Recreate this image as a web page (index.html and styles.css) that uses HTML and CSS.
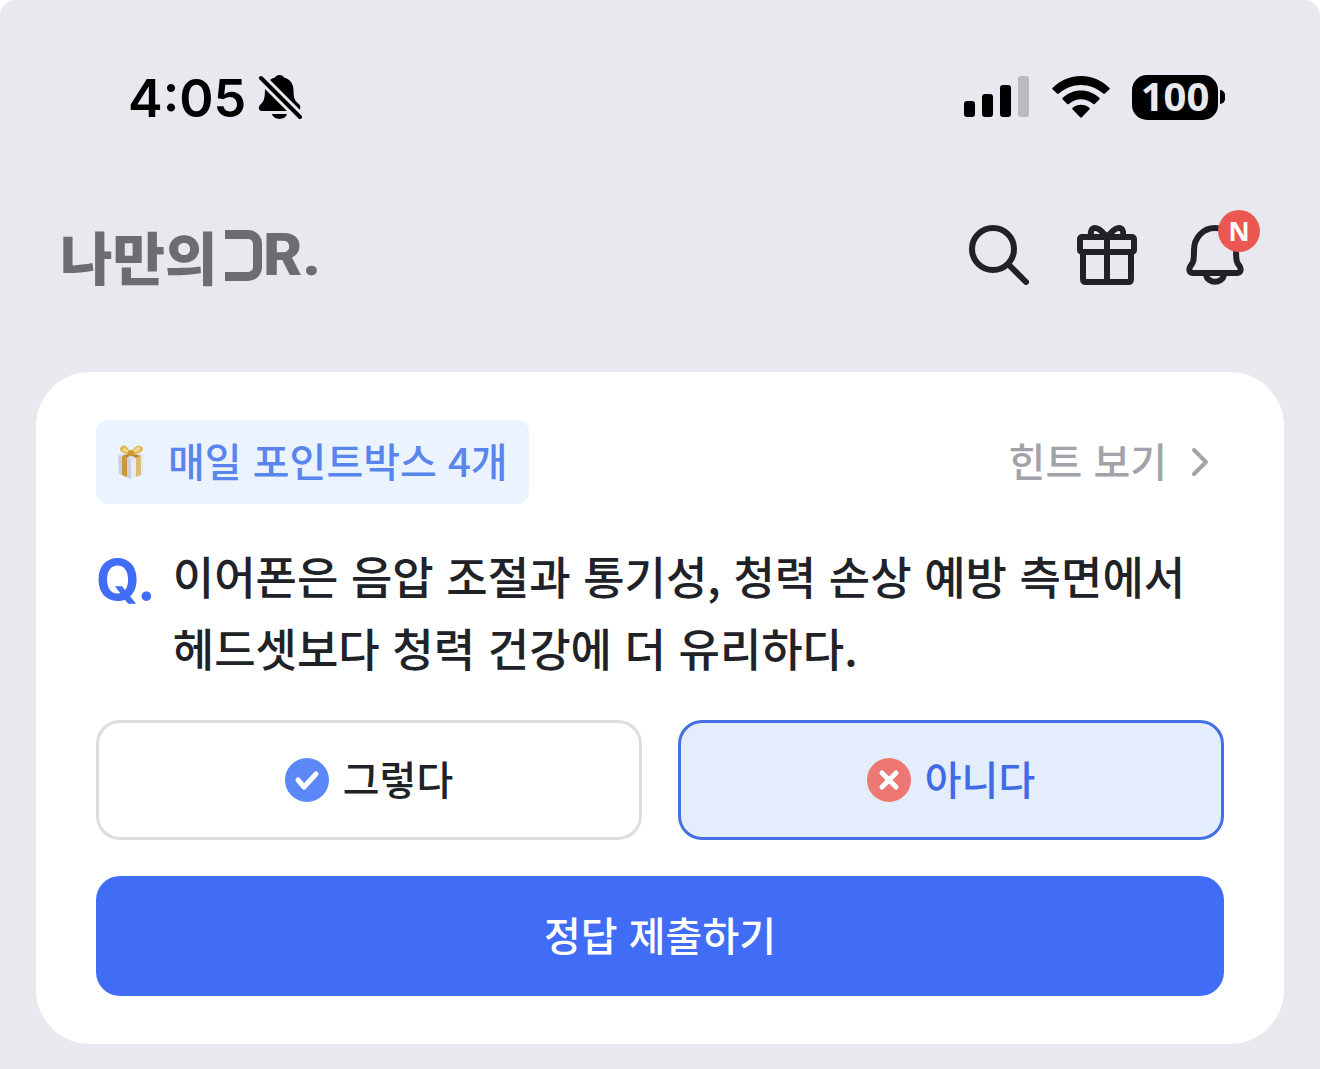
FILE: index.html
```html
<!DOCTYPE html>
<html lang="ko">
<head>
  <meta charset="UTF-8">
  <meta name="viewport" content="width=device-width, initial-scale=1">
  <title>나만의DR.</title>
  <link rel="stylesheet" href="styles.css">
</head>
<body>
  <div class="screen">

    <div class="status-bar">
      <div class="status-left">
        <span class="time">4:05</span>
        <svg width="44" height="46" viewBox="0 0 44 46" aria-hidden="true">
          <path d="M9 9 C11 6 14 4.500 17 3.500 C18 0 25 0 26 3.500 C32 5 35.500 10 35.500 16 C35.500 25 37 27 41 30 C43 32 43 37 39 37 H4 C0 37 0 32 3 30 C6 27 7 24 7 14 Z"/>
          <path d="M14 40 H29 C27 46.500 16 46.500 14 40 Z"/>
          <path class="slash-gap" d="M0 1 L44 45"/>
          <path class="slash" d="M3 4 L42 43"/>
        </svg>
      </div>
      <div class="status-right">
        <svg width="66" height="42" viewBox="0 0 66 42" aria-hidden="true">
          <rect x="0" y="25" width="11" height="16" rx="3"/>
          <rect x="18" y="18" width="11" height="23" rx="3"/>
          <rect x="36" y="9" width="11" height="32" rx="3"/>
          <rect class="bar-off" x="54" y="0" width="11" height="41" rx="3"/>
        </svg>
        <svg width="58" height="42" viewBox="0 0 58 42" aria-hidden="true">
          <path d="M0.500 12 C16 -4 42 -4 57.500 12 Q58 12.700 57.500 13.200 L53 17.600 Q52 18.300 51.200 17.600 C39 6 19 6 6.800 17.600 Q6 18.300 5 17.600 L0.500 13.200 Q0 12.700 0.500 12 Z"/>
          <path d="M10.500 22 C21 12 37 12 47.500 22 Q48 22.700 47.500 23.300 L42.800 28 Q42 28.600 41.200 28 C34 21.500 24 21.500 16.800 28 Q16 28.600 15.200 28 L10.500 23.300 Q10 22.700 10.500 22 Z"/>
          <path d="M20.400 32 C25.500 27.800 32.500 27.800 37.600 32 Q38.200 32.700 37.600 33.300 L29.800 41.300 Q29 42 28.200 41.300 L20.400 33.300 Q19.800 32.700 20.400 32 Z"/>
        </svg>
        <div class="battery"><span class="battery-level">100</span><span class="battery-cap"></span></div>
      </div>
    </div>

    <header class="app-header">
      <h1 class="logo"><span>나만의</span><span class="logo-d" role="img" aria-label="D"></span><span class="logo-r">R.</span></h1>
      <nav class="actions">
        <button class="icon-btn" type="button" aria-label="검색">
          <svg width="60" height="60" viewBox="0 0 60 60">
            <circle cx="24" cy="24" r="21"/>
            <path d="M39 39 L57 57"/>
          </svg>
        </button>
        <button class="icon-btn" type="button" aria-label="선물">
          <svg width="60" height="60" viewBox="0 0 60 60">
            <rect x="3" y="12" width="54" height="15" rx="2"/>
            <path d="M6 27 V54 Q6 57 9 57 H51 Q54 57 54 54 V27 M30 12 V57"/>
            <path d="M14 11 C13 6 15 3 18 3 C23 3 26 8 30 12 C34 8 37 3 42 3 C45 3 47 6 46 11"/>
          </svg>
        </button>
        <button class="icon-btn" type="button" aria-label="알림">
          <svg width="60" height="60" viewBox="0 0 60 60">
            <path d="M30 3 C18 3 9 13 9 25 C9 37 8 38 5.500 41 C3 45 5 48 8 48 H52 C55 48 57 45 54.500 41 C52 38 51 37 51 25 C51 13 42 3 30 3 Z"/>
            <path d="M21 50 C23 59 37 59 39 50"/>
          </svg>
          <span class="badge">N</span>
        </button>
      </nav>
    </header>

    <main class="card">
      <div class="card-top">
        <div class="chip">
          <svg width="28" height="36" viewBox="0 0 28 36" aria-hidden="true">
            <path fill="#cfcedb" d="M1 11 L14 15 V35 L2 30 Z"/>
            <path fill="#e9e9f4" d="M14 15 L27 11 L26 30 L14 35 Z"/>
            <path fill="#dddce6" d="M1 11 L14 8 L27 11 L14 16 Z"/>
            <path fill="#c39a3e" d="M5 12 L10 14 V33 L5 31 Z"/>
            <path fill="#d9bd75" d="M19 14 L24 12 V31 L19 33 Z"/>
            <path fill="#b98d2f" d="M5 12 L14 9 L24 12 L19 14 L14 11 L10 14 Z"/>
            <path fill="#dfb94f" d="M14 9 C10 1 6 0 4 3 C1 6 4 9 14 11 C24 10 28 6 25 3 C22 0 17 2 14 9 Z"/>
            <path fill="#f0da90" d="M12 8 C9 4 7 3 6 5 C5 7 8 8 12 8 Z M16 8 C19 3 22 2 23 4 C24 6 20 8 16 8 Z"/>
            <circle cx="14" cy="9" r="3" fill="#c9962f"/>
          </svg>
          <span class="label">매일 포인트박스 4개</span>
        </div>
        <a class="hint" href="#hint">
          <span class="label">힌트 보기</span>
          <svg width="18" height="30" viewBox="0 0 18 30" aria-hidden="true"><path d="M3 3 L15 15 L3 27"/></svg>
        </a>
      </div>

      <div class="question">
        <span class="question-mark">Q.</span>
        <p class="question-text">이어폰은 음압 조절과 통기성, 청력 손상 예방 측면에서 헤드셋보다 청력 건강에 더 유리하다.</p>
      </div>

      <div class="answers">
        <button class="answer" type="button" aria-pressed="false">
          <svg width="44" height="44" viewBox="0 0 44 44" aria-hidden="true">
            <circle cx="22" cy="22" r="22" fill="#5b87f7"/>
            <path d="M13 22 L19 29 L31 16"/>
          </svg>
          <span class="label">그렇다</span>
        </button>
        <button class="answer selected" type="button" aria-pressed="true">
          <svg width="44" height="44" viewBox="0 0 44 44" aria-hidden="true">
            <circle cx="22" cy="22" r="22" fill="#ed7773"/>
            <path d="M15 15 L29 29 M29 15 L15 29"/>
          </svg>
          <span class="label">아니다</span>
        </button>
      </div>

      <button class="submit" type="button"><span class="label">정답 제출하기</span></button>
    </main>

  </div>
</body>
</html>
```
FILE: styles.css
```css
* { box-sizing: border-box; }
body { margin: 0; background: #fff; color: #202227; font-family: "Noto Sans CJK KR", sans-serif; font-weight: 500; }
button { font: inherit; color: inherit; cursor: pointer; }
svg { display: block; flex: none; }

.screen { min-height: 100vh; padding: 66px 36px 24px; background: #e8e9ee; border-radius: 16px 16px 0 0; }

/* status bar */
.status-bar { display: flex; justify-content: space-between; align-items: center; height: 62px; padding: 0 59px 0 92px; color: #000; }
.status-left { display: flex; align-items: center; gap: 12px; }
.time { padding-top: 4px; font-family: Inter, sans-serif; font-size: 52px; font-weight: 600; line-height: 62px; }
.slash-gap { stroke: #e8e9ee; stroke-width: 10; }
.slash { stroke: #000; stroke-width: 4; stroke-linecap: round; }
.status-right { display: flex; align-items: center; gap: 22px; }
.bar-off { fill: #b9babe; }
.battery { display: flex; align-items: center; gap: 2px; }
.battery-level { width: 86px; height: 45px; border-radius: 15px; background: #000; color: #e8e9ee; font-family: "Noto Sans", sans-serif; font-size: 40px; font-weight: 700; line-height: 42px; text-align: center; }
.battery-cap { width: 5px; height: 14px; border-radius: 0 5px 5px 0; background: #000; }

/* header */
.app-header { display: flex; justify-content: space-between; align-items: center; height: 244px; padding: 10px 39px 0 24px; }
.logo { display: flex; align-items: center; margin: 0; color: #6b6d73; font-size: 57px; font-weight: 900; line-height: 60px; }
.logo-d { width: 37px; height: 51px; margin-left: 8px; border: 9px solid #6b6d73; border-left: 0; border-radius: 0 14px 14px 0; }
.logo-r { margin-left: 1px; font-family: Roboto, sans-serif; font-size: 60px; line-height: 68px; }
.actions { display: flex; gap: 48px; }
.icon-btn { position: relative; padding: 0; border: 0; background: none; }
.icon-btn svg { fill: none; stroke: #202227; stroke-width: 6; stroke-linecap: round; stroke-linejoin: round; }
.badge { position: absolute; top: -15px; right: -15px; width: 42px; height: 42px; border-radius: 50%; background: #ea5851; color: #fff; font-family: "Noto Sans", sans-serif; font-size: 26px; font-weight: 700; line-height: 42px; text-align: center; }

/* quiz card */
.card { display: flex; flex-direction: column; gap: 36px; padding: 48px 60px; border-radius: 54px; background: #fff; }
.card-top { display: flex; justify-content: space-between; align-items: center; }
.label { padding-bottom: 4px; font-size: 40px; line-height: 60px; }
.chip { display: flex; align-items: center; gap: 23px; height: 84px; padding: 0 21px; border-radius: 12px; background: #ebf4fe; color: #5a85ec; }
.hint { display: flex; align-items: center; gap: 24px; padding-right: 15px; color: #a1a3a9; text-decoration: none; }
.hint svg { fill: none; stroke: #a1a3a9; stroke-width: 4; stroke-linecap: round; stroke-linejoin: round; }
.question { display: flex; gap: 17px; line-height: 72px; }
.question-mark { color: #416df6; font-family: Inter, sans-serif; font-size: 56px; font-weight: 700; line-height: 80px; }
.question-text { margin: 0; font-size: 45px; word-break: keep-all; }
.answers { display: grid; grid-template-columns: 1fr 1fr; gap: 36px; }
.answer { display: flex; justify-content: center; align-items: center; gap: 14px; height: 120px; border: 3px solid #dcdde1; border-radius: 24px; background: #fff; }
.answer path { fill: none; stroke: #fff; stroke-width: 5; stroke-linecap: round; stroke-linejoin: round; }
.answer.selected { border-color: #4570e2; background: #e4edfc; color: #416ae6; }
.submit { display: flex; justify-content: center; align-items: center; height: 120px; border: 0; border-radius: 24px; background: #416df6; color: #fff; }
```
